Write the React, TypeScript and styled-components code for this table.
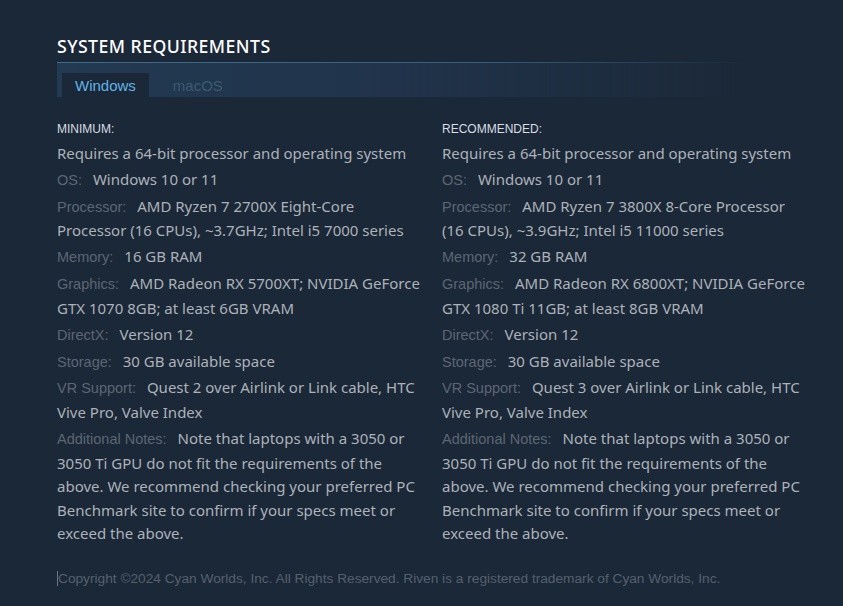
import React from 'react';
import styled, { createGlobalStyle } from 'styled-components';

const GlobalStyle = createGlobalStyle`
  html, body {
    margin: 0;
    background: #1b2838;
  }
`;

const Page = styled.div`
  width: 843px;
  height: 606px;
  box-sizing: border-box;
  padding: 34px 16px 0 57px;
  background: #1b2838;
  overflow: hidden;
`;

const Heading = styled.h2`
  margin: 0 0 4px;
  font-family: 'Noto Sans', sans-serif;
  font-size: 17.7px;
  font-weight: 500;
  letter-spacing: 0.025em;
  color: #ffffff;
  text-transform: uppercase;
  line-height: 24px;
`;

const TabBar = styled.div`
  display: flex;
  width: 688px;
  height: 35px;
  padding: 10px 0 0 5px;
  box-sizing: border-box;
  border-top: 1px solid transparent;
  border-image: linear-gradient(to right, #3d6c8a 0%, #34617e 60%, rgba(52, 97, 126, 0) 100%) 1;
  background: linear-gradient(to right, #223a52 0%, #20334a 50%, rgba(32, 51, 74, 0) 100%);
`;

const Tab = styled.div<{ active?: boolean }>`
  padding: 0 13px;
  height: 25px;
  line-height: 26px;
  font-family: 'Liberation Sans', Arial, sans-serif;
  font-size: 15px;
  color: ${(p) => (p.active ? '#5fb3e6' : '#3e5a72')};
  background: ${(p) => (p.active ? '#1b2838' : 'transparent')};
  margin-right: 11px;
`;

const Columns = styled.div`
  display: grid;
  grid-template-columns: 385px 385px;
  margin-top: 24px;
`;

const Column = styled.div`
  padding-right: 20px;
`;

const ColTitle = styled.div`
  font-family: 'Liberation Sans', Arial, sans-serif;
  font-size: 12px;
  color: #d6dde3;
  text-transform: uppercase;
  line-height: 16px;
  margin-bottom: 5px;
`;

const List = styled.ul`
  list-style: none;
  margin: 0;
  padding: 0;
`;

const Item = styled.li`
  font-family: 'Noto Sans', sans-serif;
  font-size: 15px;
  line-height: 23.6px;
  color: #acb2b8;
  margin-bottom: 2.3px;
`;

const Label = styled.span`
  font-family: 'Liberation Sans', Arial, sans-serif;
  font-size: 14.5px;
  color: #5b6673;
  margin-right: 7px;
`;

const Footer = styled.div`
  margin-top: 22px;
  font-family: 'Liberation Sans', Arial, sans-serif;
  font-size: 13.7px;
  color: #55606d;
  line-height: 18px;
`;

const Caret = styled.span`
  display: inline-block;
  width: 1px;
  height: 15px;
  background: #6d7782;
  vertical-align: -3px;
`;

type Req = { label?: string; value: string };

const notes =
  'Note that laptops with a 3050 or 3050 Ti GPU do not fit the requirements of the above. We recommend checking your preferred PC Benchmark site to confirm if your specs meet or exceed the above.';

const minimum: Req[] = [
  { value: 'Requires a 64-bit processor and operating system' },
  { label: 'OS:', value: 'Windows 10 or 11' },
  { label: 'Processor:', value: 'AMD Ryzen 7 2700X Eight-Core Processor (16 CPUs), ~3.7GHz; Intel i5 7000 series' },
  { label: 'Memory:', value: '16 GB RAM' },
  { label: 'Graphics:', value: 'AMD Radeon RX 5700XT; NVIDIA GeForce GTX 1070 8GB; at least 6GB VRAM' },
  { label: 'DirectX:', value: 'Version 12' },
  { label: 'Storage:', value: '30 GB available space' },
  { label: 'VR Support:', value: 'Quest 2 over Airlink or Link cable, HTC Vive Pro, Valve Index' },
  { label: 'Additional Notes:', value: notes },
];

const recommended: Req[] = [
  { value: 'Requires a 64-bit processor and operating system' },
  { label: 'OS:', value: 'Windows 10 or 11' },
  { label: 'Processor:', value: 'AMD Ryzen 7 3800X 8-Core Processor (16 CPUs), ~3.9GHz; Intel i5 11000 series' },
  { label: 'Memory:', value: '32 GB RAM' },
  { label: 'Graphics:', value: 'AMD Radeon RX 6800XT; NVIDIA GeForce GTX 1080 Ti 11GB; at least 8GB VRAM' },
  { label: 'DirectX:', value: 'Version 12' },
  { label: 'Storage:', value: '30 GB available space' },
  { label: 'VR Support:', value: 'Quest 3 over Airlink or Link cable, HTC Vive Pro, Valve Index' },
  { label: 'Additional Notes:', value: notes },
];

const ReqColumn = ({ title, items }: { title: string; items: Req[] }) => (
  <Column>
    <ColTitle>{title}</ColTitle>
    <List>
      {items.map((r, i) => (
        <Item key={i}>
          {r.label && <Label>{r.label}</Label>} {r.value}
        </Item>
      ))}
    </List>
  </Column>
);

const App = () => (
  <Page>
    <GlobalStyle />
    <Heading>System Requirements</Heading>
    <TabBar>
      <Tab active>Windows</Tab>
      <Tab>macOS</Tab>
    </TabBar>
    <Columns>
      <ReqColumn title="Minimum:" items={minimum} />
      <ReqColumn title="Recommended:" items={recommended} />
    </Columns>
    <Footer>
      <Caret />
      Copyright ©2024 Cyan Worlds, Inc. All Rights Reserved. Riven is a registered trademark of Cyan Worlds, Inc.
    </Footer>
  </Page>
);

export default App;
